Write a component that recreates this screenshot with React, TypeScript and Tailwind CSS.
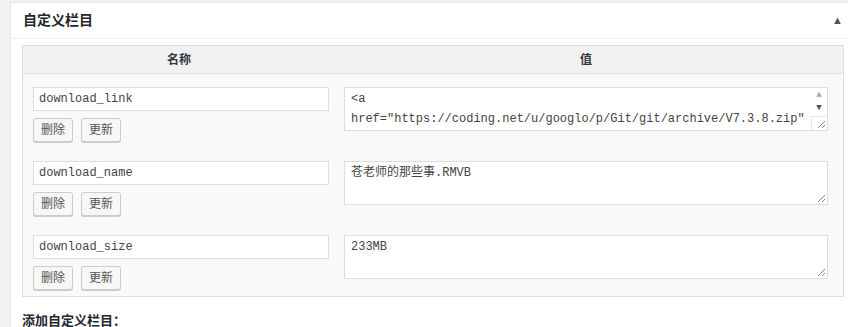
import React from "react";

const cjk = '"Liberation Sans", "Noto Sans CJK SC", sans-serif';
const mono = '"Liberation Mono", "Noto Sans CJK SC", monospace';

type Field = { name: string; lines: string[]; scroll?: boolean };

const fields: Field[] = [
  {
    name: "download_link",
    lines: ["<a", 'href="https://coding.net/u/googlo/p/Git/git/archive/V7.3.8.zip"'],
    scroll: true,
  },
  { name: "download_name", lines: ["苍老师的那些事.RMVB"] },
  { name: "download_size", lines: ["233MB"] },
];

const Grip = () => (
  <svg className="absolute right-[1px] bottom-[1px]" width="9" height="9" viewBox="0 0 9 9">
    <line x1="8" y1="1" x2="1" y2="8" stroke="#888" strokeWidth="1" />
    <line x1="8" y1="5" x2="5" y2="8" stroke="#888" strokeWidth="1" />
  </svg>
);

const Scrollbar = () => (
  <div className="absolute right-0 top-0 bottom-0 w-[16px] bg-white flex flex-col items-center">
    <div className="h-[14px] flex items-center justify-center text-[9px] leading-none text-[#a3a3a3]">▲</div>
    <div className="h-[12px] flex items-center justify-center text-[9px] leading-none text-[#505050]">▼</div>
    <div className="flex-1" />
    <div className="h-[14px] w-full border-t border-l border-[#e6e6e6]" />
  </div>
);

const Button = ({ label }: { label: string }) => (
  <button
    className="h-[24px] px-[7px] border border-[#cccccc] bg-[#f7f7f7] rounded-[3px] shadow-[0_1px_0_#cccccc] text-[12px] text-[#555555]"
    style={{ fontFamily: cjk }}
  >
    {label}
  </button>
);

const Row = ({ f }: { f: Field }) => (
  <div className="grid grid-cols-[312px_1fr] h-[74px]">
    <div className="pl-[10px] pr-[6px] pt-[13px]">
      <div
        className="h-[24px] border border-[#dddddd] bg-white px-[5px] flex items-center text-[12px] text-[#444444]"
        style={{ fontFamily: mono }}
      >
        {f.name}
      </div>
      <div className="flex gap-[8px] mt-[7px]">
        <Button label="删除" />
        <Button label="更新" />
      </div>
    </div>
    <div className="pl-[9px] pr-[15px] pt-[13px]">
      <div
        className="relative h-[44px] border border-[#dddddd] bg-white pl-[6px] pt-[1px] overflow-hidden text-[12px] leading-[20px] text-[#444444]"
        style={{ fontFamily: mono }}
      >
        {f.lines.map((l) => (
          <div key={l} className="whitespace-pre">
            {l}
          </div>
        ))}
        {f.scroll && <Scrollbar />}
        <Grip />
      </div>
    </div>
  </div>
);

export default function App() {
  return (
    <div className="w-[848px] h-[327px] overflow-hidden bg-[#f1f1f1] pt-[2px] pl-[10px]" style={{ fontFamily: cjk }}>
      <div className="w-[846px] bg-white border border-[#e5e5e5]">
        <div className="h-[36px] flex items-center justify-between pl-[12px] pr-[12px] border-b border-[#eeeeee]">
          <span className="text-[14px] font-bold text-[#23282d]">自定义栏目</span>
          <span className="text-[11px] text-[#555555]">▲</span>
        </div>
        <div className="px-[11px] pt-[6px] pb-[12px]">
          <div className="border border-[#dfdfdf] bg-[#f9f9f9]">
            <div className="grid grid-cols-[312px_1fr] h-[28px] bg-[#f1f1f1] border-b border-[#dfdfdf] text-[12px] font-bold text-[#32373c]">
              <div className="flex items-center justify-center">名称</div>
              <div className="flex items-center justify-center pr-[6px]">值</div>
            </div>
            {fields.map((f) => (
              <Row key={f.name} f={f} />
            ))}
          </div>
          <div className="mt-[14px] text-[13px] font-bold text-[#23282d]">添加自定义栏目：</div>
        </div>
      </div>
    </div>
  );
}
